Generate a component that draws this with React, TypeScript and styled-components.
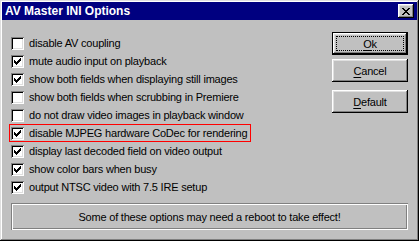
import { FC } from 'react'
import styled, { createGlobalStyle } from 'styled-components'

const GlobalStyle = createGlobalStyle`
  html, body {
    margin: 0;
    padding: 0;
    background: #c0c0c0;
  }
  body {
    font-family: "Liberation Sans", Arial, sans-serif;
    font-size: 11px;
    letter-spacing: -0.2px;
    color: #000;
  }
`

const Window = styled.div`
  width: 419px;
  height: 241px;
  box-sizing: border-box;
  padding: 2px;
  display: flex;
  flex-direction: column;
  background: #c0c0c0;
  box-shadow:
    inset -1px -1px #000,
    inset 1px 1px #dfdfdf,
    inset -2px -2px #808080,
    inset 2px 2px #fff;
`

const TitleBar = styled.div`
  height: 18px;
  display: flex;
  align-items: center;
  justify-content: space-between;
  padding: 0 3px 0 3px;
  background: #000080;
  color: #fff;
`

const Title = styled.span`
  font-weight: bold;
  font-size: 12px;
  letter-spacing: 0;
  line-height: 18px;
`

const CloseButton = styled.div`
  width: 16px;
  height: 14px;
  box-sizing: border-box;
  display: flex;
  align-items: center;
  justify-content: center;
  background: #c0c0c0;
  box-shadow:
    inset -1px -1px #000,
    inset 1px 1px #fff,
    inset -2px -2px #808080,
    inset 2px 2px #dfdfdf;
`

const Body = styled.div`
  flex: 1;
  display: flex;
  flex-direction: column;
  padding: 12px 9px 0 9px;
`

const Top = styled.div`
  display: flex;
  justify-content: space-between;
`

const OptionList = styled.div`
  display: flex;
  flex-direction: column;
  padding-top: 2px;
`

const Row = styled.div<{ $marked?: boolean }>`
  height: 18px;
  width: fit-content;
  box-sizing: border-box;
  display: flex;
  align-items: center;
  gap: 5px;
  margin-left: -2px;
  padding: 0 4px 0 2px;
  line-height: 18px;
  white-space: nowrap;
  outline: ${(p) => (p.$marked ? '1px solid #ff0000' : 'none')};
  outline-offset: -1px;
`

const Box = styled.span`
  width: 13px;
  height: 13px;
  flex: none;
  box-sizing: border-box;
  display: flex;
  align-items: center;
  justify-content: center;
  background: #fff;
  box-shadow:
    inset 1px 1px #808080,
    inset -1px -1px #fff,
    inset 2px 2px #000,
    inset -2px -2px #dfdfdf;
`

const Buttons = styled.div`
  display: flex;
  flex-direction: column;
  width: 76px;
`

const Button = styled.div<{ $isDefault?: boolean; $gap?: number }>`
  height: 23px;
  box-sizing: border-box;
  display: flex;
  align-items: center;
  justify-content: center;
  margin-bottom: ${(p) => p.$gap ?? 0}px;
  background: #c0c0c0;
  border: ${(p) => (p.$isDefault ? '1px solid #000' : 'none')};
  box-shadow:
    inset -1px -1px #000,
    inset 1px 1px #fff,
    inset -2px -2px #808080,
    inset 2px 2px #dfdfdf;
`

const Focus = styled.span`
  flex: 1;
  align-self: stretch;
  margin: 3px;
  display: flex;
  align-items: center;
  justify-content: center;
  border: 1px dotted #000;
`

const Label = styled.span`
  & u {
    text-decoration: underline;
    text-underline-offset: 2px;
  }
`

const Notice = styled.div`
  margin-top: 7px;
  height: 27px;
  display: flex;
  align-items: center;
  justify-content: center;
  box-shadow:
    inset 1px 1px #808080,
    inset -1px -1px #fff,
    inset 2px 2px #fff,
    inset -2px -2px #808080;
`

const Check: FC = () => (
  <svg width="7" height="7" viewBox="0 0 7 7" shapeRendering="crispEdges">
    <path d="M6 0h1v3h-1zM5 1h1v3h-1zM4 2h1v3h-1zM3 3h1v3h-1zM2 4h1v3h-1zM1 3h1v3h-1zM0 2h1v3h-1z" fill="#000" />
  </svg>
)

const CloseIcon: FC = () => (
  <svg width="8" height="7" viewBox="0 0 8 7" shapeRendering="crispEdges">
    <path d="M0 0h2v1h-2zM6 0h2v1h-2zM1 1h2v1h-2zM5 1h2v1h-2zM2 2h4v1h-4zM3 3h2v1h-2zM2 4h4v1h-4zM1 5h2v1h-2zM5 5h2v1h-2zM0 6h2v1h-2zM6 6h2v1h-2z" fill="#000" />
  </svg>
)

const options = [
  { text: 'disable AV coupling', checked: false },
  { text: 'mute audio input on playback', checked: true },
  { text: 'show both fields when displaying still images', checked: true },
  { text: 'show both fields when scrubbing in Premiere', checked: false },
  { text: 'do not draw video images in playback window', checked: false },
  { text: 'disable MJPEG hardware CoDec for rendering', checked: true, marked: true },
  { text: 'display last decoded field on video output', checked: true },
  { text: 'show color bars when busy', checked: true },
  { text: 'output NTSC video with 7.5 IRE setup', checked: true },
]

export default function App() {
  return (
    <>
      <GlobalStyle />
      <Window>
        <TitleBar>
          <Title>AV Master INI Options</Title>
          <CloseButton><CloseIcon /></CloseButton>
        </TitleBar>
        <Body>
          <Top>
            <OptionList>
              {options.map((o) => (
                <Row key={o.text} $marked={o.marked}>
                  <Box>{o.checked && <Check />}</Box>
                  {o.text}
                </Row>
              ))}
            </OptionList>
            <Buttons>
              <Button $isDefault $gap={4}>
                <Focus><Label><u>O</u>k</Label></Focus>
              </Button>
              <Button $gap={8}><Label><u>C</u>ancel</Label></Button>
              <Button><Label><u>D</u>efault</Label></Button>
            </Buttons>
          </Top>
          <Notice>Some of these options may need a reboot to take effect!</Notice>
        </Body>
      </Window>
    </>
  )
}
